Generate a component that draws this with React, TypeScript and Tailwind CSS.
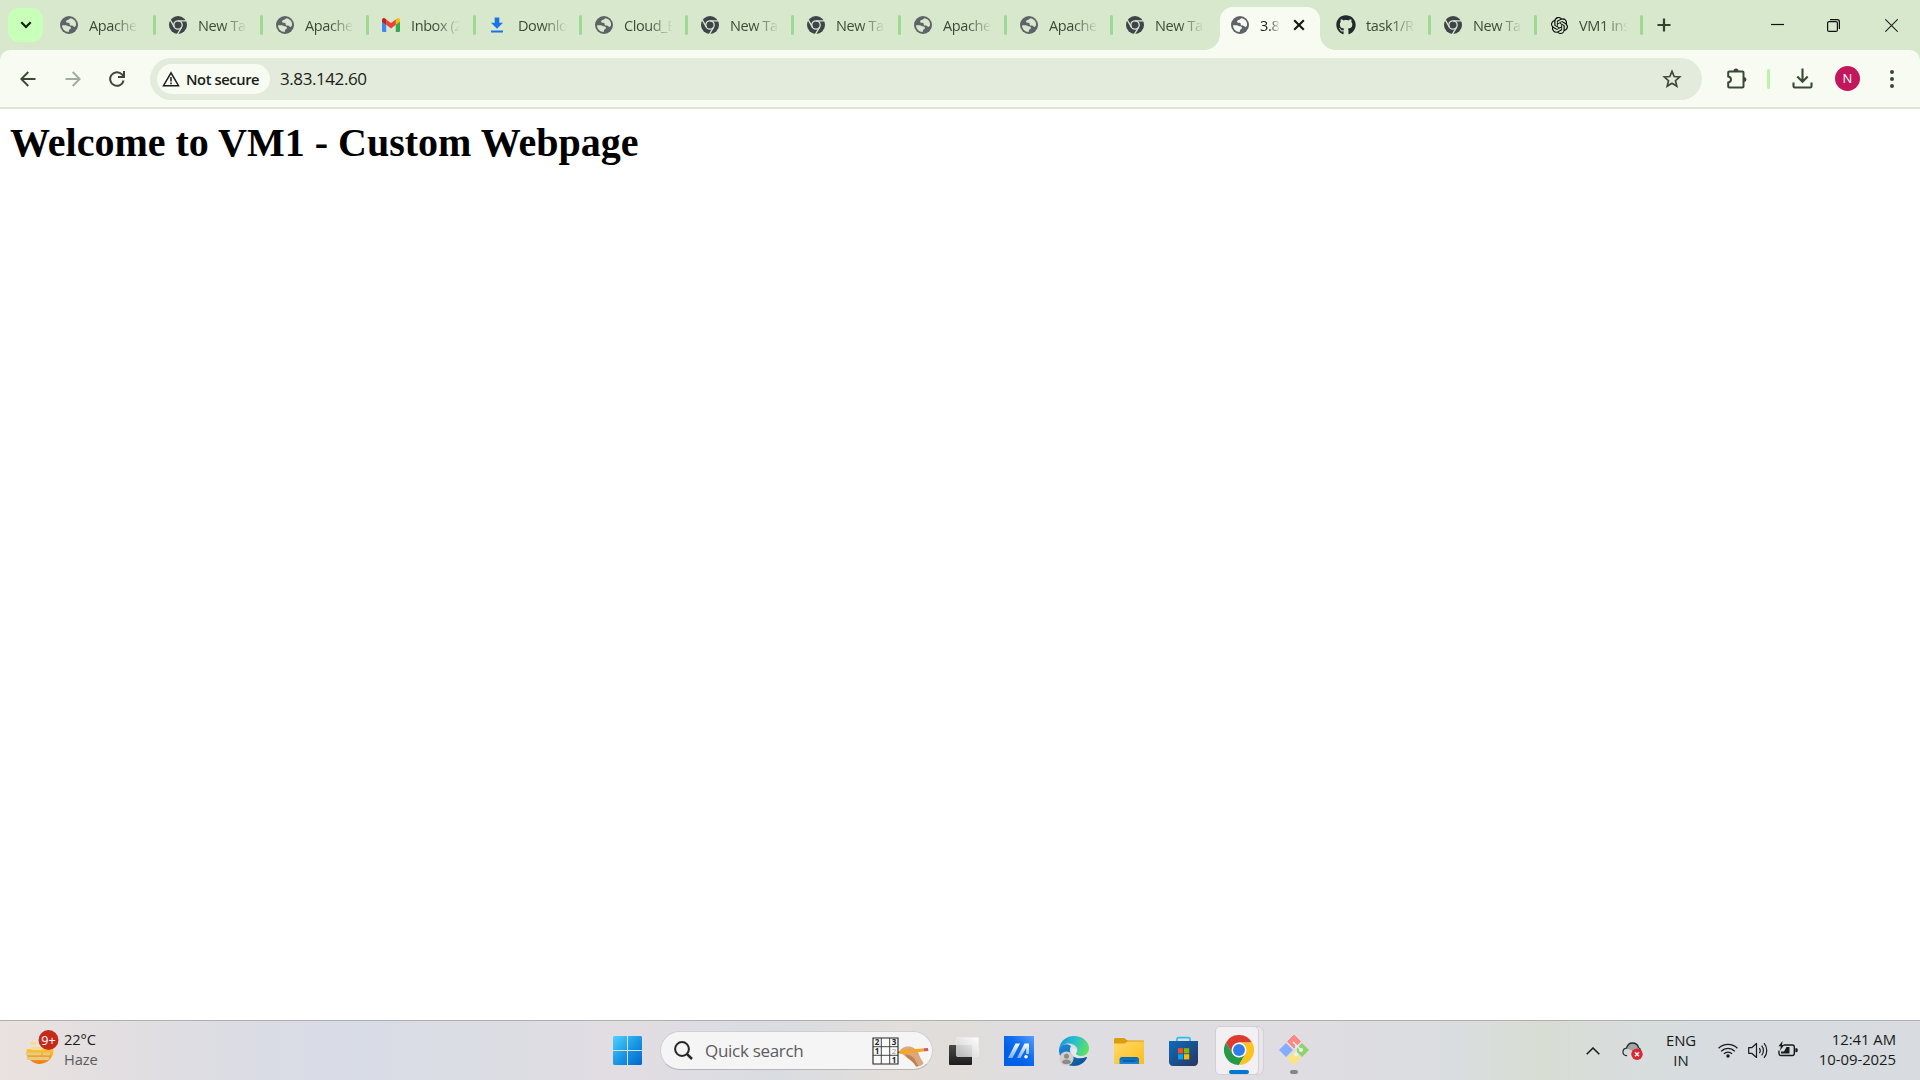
import React from "react";
import { FaGithub } from "react-icons/fa";
import { SiOpenai } from "react-icons/si";

type Kind = "globe" | "chrome" | "gmail" | "download" | "github" | "openai";

const Globe = ({ land = "#d7e8cd" }: { land?: string }) => (
  <svg viewBox="0 0 18 18" className="size-[18px]" fill={land}>
    <circle cx="9" cy="9" r="9" fill="#5f6368" />
    <path d="M10.800 2.200c-1.300.2-1.500 1.300-2.600 1.500-1.300.3-2.200 1-2.100 2.100.1 1 1.200 1.100 2.300 1 1.100 0 1.300.9 1.300 1.700 0 .9 1 1.100 2.200 1.100 1.200 0 1.300 1.400 2.500 1.300.8-.1 1.400-.7 1.600-1.600.5-3.500-1.600-6.300-5.200-7.100z" />
    <path d="M2 9.200h3.600c1.500 0 2.200 1 3.300 1.100 1.300.1 2.200.8 2 2-.2 1-1.400.8-1.800 1.600-.3.700 0 1.500-.6 2.100C4.900 15.800 2.200 13 2 9.200z" />
  </svg>
);

const ChromeMono = () => (
  <svg viewBox="0 0 18 18" className="size-[18px]">
    <circle cx="9" cy="9" r="9" fill="#3f444a" />
    <g stroke="#d7e8cd" strokeWidth="1.3" fill="none">
      <circle cx="9" cy="9" r="4.200" />
      <path d="M9 4.800h8.500M5.400 11.100L1.100 3.700M12.600 11.100L8.300 18.500" />
    </g>
  </svg>
);

const Gmail = () => (
  <svg viewBox="0 0 18 14" className="h-[14px] w-[18px]">
    <path d="M0 2.500v10.200C0 13.400.6 14 1.300 14h2.900V5.800z" fill="#4285f4" />
    <path d="M18 2.500v10.200c0 .7-.6 1.300-1.300 1.300h-2.900V5.800z" fill="#34a853" />
    <path d="M13.800 1.500v5.300L18 3.700V2c0-1.800-1.900-2.600-3.200-1.500z" fill="#fbbc04" />
    <path d="M4.200 6.800V1.500L9 5.100l4.800-3.600v5.300L9 10.400z" fill="#ea4335" />
    <path d="M0 2v1.700l4.200 3.100V1.500L3.200.5C1.900-.6 0 .2 0 2z" fill="#c5221f" />
  </svg>
);

const DownloadFav = () => (
  <svg viewBox="0 0 12 16" className="mr-[2px] h-4 w-3" fill="#1a73e8">
    <path d="M3.700 0.500h4.600v5.300H12L6 11.700 0 5.800h3.700zM0 13.500h12v2H0z" />
  </svg>
);

function Favicon({ kind }: { kind: Kind }) {
  switch (kind) {
    case "globe":
      return <Globe />;
    case "chrome":
      return <ChromeMono />;
    case "gmail":
      return <Gmail />;
    case "download":
      return <DownloadFav />;
    case "github":
      return <FaGithub className="size-5 shrink-0 text-[#24292f]" />;
    case "openai":
      return <SiOpenai className="size-[17px] text-black" />;
  }
}

function Tab({ kind, title, width, inset = "ml-[12px]" }: { kind: Kind; title: string; width: string; inset?: string }) {
  return (
    <div className={`flex h-[50px] shrink-0 items-center ${width}`}>
      <div className={`flex w-[20px] shrink-0 justify-center ${inset}`}>
        <Favicon kind={kind} />
      </div>
      <div className="ml-[10px] mt-[2px] w-[49px] overflow-hidden whitespace-nowrap text-[14.5px] leading-5 tracking-[-0.4px] text-[#3c4b37] [mask-image:linear-gradient(to_right,black_50%,transparent_100%)]">
        {title}
      </div>
    </div>
  );
}

const Sep = () => <div className="h-5 w-[3px] shrink-0 rounded-full bg-[#9fd892]" />;

const leftTabs: { kind: Kind; title: string; width: string }[] = [
  { kind: "globe", title: "Apache2", width: "w-[106px]" },
  { kind: "chrome", title: "New Tab", width: "w-[104px]" },
  { kind: "globe", title: "Apache2", width: "w-[103px]" },
  { kind: "gmail", title: "Inbox (2)", width: "w-[104px]" },
  { kind: "download", title: "Downloads", width: "w-[103px]" },
  { kind: "globe", title: "Cloud_E", width: "w-[103px]" },
  { kind: "chrome", title: "New Tab", width: "w-[103px]" },
  { kind: "chrome", title: "New Tab", width: "w-[104px]" },
  { kind: "globe", title: "Apache2", width: "w-[103px]" },
  { kind: "globe", title: "Apache2", width: "w-[103px]" },
  { kind: "chrome", title: "New Tab", width: "w-[103px]" },
];

function TabStrip() {
  return (
    <header className="flex h-[50px] items-center bg-[#d7e8cd]">
      <button className="ml-2 flex h-[34px] w-[35px] shrink-0 items-center justify-center rounded-[11px] bg-[#c8ffb9]">
        <svg viewBox="0 0 12 8" className="mb-px h-[8px] w-[12px]" fill="none" stroke="#10200d" strokeWidth="2.2">
          <path d="M1.300 1.300L6 6l4.700-4.700" />
        </svg>
      </button>
      <div className="ml-1 flex items-center">
        {leftTabs.map((t, i) => (
          <React.Fragment key={i}>
            <Tab {...t} />
            {i < 10 && <Sep />}
          </React.Fragment>
        ))}
      </div>
      <div className="relative ml-[4px] mt-[7px] flex h-[43px] w-[100px] shrink-0 items-center rounded-t-[13px] bg-[#f8fbf2]">
        <div className="absolute bottom-0 -left-[15px] size-[15px] bg-[radial-gradient(circle_at_0_0,transparent_14.500px,#f8fbf2_15px)]" />
        <div className="absolute bottom-0 -right-[15px] size-[15px] bg-[radial-gradient(circle_at_100%_0,transparent_14.500px,#f8fbf2_15px)]" />
        <div className="mb-[7px] ml-[11px]">
          <Globe land="#f8fbf2" />
        </div>
        <div className="mb-[5px] ml-[11px] w-[20px] overflow-hidden whitespace-nowrap text-[14.5px] leading-5 tracking-[-0.3px] text-[#1b1c18] [mask-image:linear-gradient(to_right,black_45%,transparent_100%)]">
          3.83.142.60
        </div>
        <svg viewBox="0 0 12 12" className="mb-[7px] ml-[13px] size-[12px]" stroke="#111a0e" strokeWidth="2.100">
          <path d="M1.200 1.200l9.600 9.600M10.800 1.200L1.200 10.800" />
        </svg>
      </div>
      <div className="ml-[3px] flex items-center">
        <Tab kind="github" title="task1/README" width="w-[105px]" inset="ml-[13px]" />
        <Sep />
        <Tab kind="chrome" title="New Tab" width="w-[103px]" />
        <Sep />
        <Tab kind="openai" title="VM1 instance" width="w-[103px]" />
        <Sep />
      </div>
      <svg viewBox="0 0 14 14" className="ml-[14px] size-[14px]" stroke="#33422e" strokeWidth="2.200">
        <path d="M7 .5v13M.5 7h13" />
      </svg>
      <div className="ml-auto mr-[22px] flex items-center">
        <svg viewBox="0 0 13 13" className="mb-0.5 size-[13px]" stroke="#111" strokeWidth="1.200">
          <path d="M0 6.500h13" />
        </svg>
        <svg viewBox="0 0 13 13" className="ml-[43px] size-[13px]" fill="none" stroke="#111" strokeWidth="1.200">
          <rect x=".6" y="2.600" width="9.800" height="9.800" rx="1.500" />
          <path d="M3 .6h7.200a2.200 2.200 0 0 1 2.200 2.200V10" />
        </svg>
        <svg viewBox="0 0 13 13" className="ml-[45px] size-[13px]" stroke="#222" strokeWidth="1.100">
          <path d="M.3.300l12.400 12.400M12.700.3L.3 12.700" />
        </svg>
      </div>
    </header>
  );
}

function Toolbar() {
  return (
    <div className="bg-[#d7e8cd]">
      <div className="flex h-[59px] items-center rounded-t-[10px] border-b-2 border-[#dde5d6] bg-[#f8fbf2]">
        <svg viewBox="0 0 16 16" className="ml-5 size-4" fill="none" stroke="#3a4936" strokeWidth="1.900">
          <path d="M15.500 8H2M8.300 1L1.300 8l7 7" />
        </svg>
        <svg viewBox="0 0 16 16" className="ml-[29px] size-4" fill="none" stroke="#a3aa9e" strokeWidth="1.900">
          <path d="M.5 8H14M7.700 1l7 7-7 7" />
        </svg>
        <svg viewBox="0 0 16 16" className="ml-[28px] mr-px size-4" fill="none" stroke="#3a4936" strokeWidth="2">
          <path d="M14.600 9.500A6.800 6.800 0 1 1 13 3.400l1.500 1.700" />
          <path d="M15 0v6H9" />
        </svg>
        <div className="ml-[24px] flex h-[42px] w-[1552px] shrink-0 items-center rounded-full bg-[#e3ebdc]">
          <div className="ml-[7px] flex h-[30px] w-[113px] items-center rounded-full bg-[#f8fbf2]">
            <svg viewBox="0 0 18 16" className="ml-[5px] h-4 w-[18px]" fill="none" stroke="#1b1c18" strokeWidth="1.500">
              <path d="M9 1.800L1.500 14.700h15z" />
              <path d="M9 6v4.500M9 11.600v1.700" />
            </svg>
            <span className="ml-[6px] whitespace-nowrap text-[14.7px] font-semibold leading-5 tracking-[-0.4px] text-[#1b1c18]">Not secure</span>
          </div>
          <span className="ml-[10px] mt-px text-[17px] leading-6 tracking-[-0.42px] text-[#1b1c18]">3.83.142.60</span>
          <svg viewBox="0 0 20 19" className="ml-auto mr-[20px] h-[19px] w-5" fill="none" stroke="#3f4a3b" strokeWidth="1.700">
            <path d="M10 2.400l2.200 5.100 5.500.5-4.200 3.700 1.300 5.400L10 14.200l-4.800 2.900 1.300-5.400L2.300 8l5.500-.5z" />
          </svg>
        </div>
        <svg viewBox="0 0 21 21" className="-mt-px ml-[24px] size-[21px]" fill="none" stroke="#3a4936" strokeWidth="2">
          <path d="M3.200 3.500h13.300c.7 0 1 .4 1 1v14c0 .6-.3 1-1 1H3.200c-.7 0-1-.4-1-1v-4c1.700-.3 2.800-1.400 2.800-3s-1.100-2.700-2.800-3v-4c0-.6.300-1 1-1z" />
          <path d="M7.500 3a2.500 2.500 0 0 1 5 0zM18 9a2.500 2.500 0 0 1 0 5z" fill="#3a4936" stroke="none" />
        </svg>
        <div className="ml-[20px] h-5 w-[3px] rounded-full bg-[#b9f3a7]" />
        <svg viewBox="0 0 21 21" className="ml-[22px] size-[21px]" fill="none" stroke="#3a4936" strokeWidth="2.100">
          <path d="M10.500.5v13M5.300 8.600l5.200 5.200 5.200-5.200M1.500 14.500v3.700c0 .8.500 1.300 1.300 1.300h15.400c.8 0 1.300-.5 1.300-1.300v-3.700" />
        </svg>
        <div className="ml-[22px] flex size-[25px] items-center justify-center rounded-full bg-[#c2185b] text-[13px] text-white">N</div>
        <svg viewBox="0 0 4 18" className="ml-[30px] h-[18px] w-1" fill="#3a4936">
          <circle cx="2" cy="2" r="2" />
          <circle cx="2" cy="9" r="2" />
          <circle cx="2" cy="16" r="2" />
        </svg>
      </div>
    </div>
  );
}

const Weather = () => (
  <svg viewBox="0 0 36 38" className="-mt-[5px] h-[38px] w-9">
    <defs>
      <linearGradient id="sun" x1="0" y1="0" x2="0" y2="1">
        <stop offset="0" stopColor="#fcc934" />
        <stop offset="1" stopColor="#f07a13" />
      </linearGradient>
    </defs>
    <path d="M2.500 20h27a14 14 0 0 1-27 6z" fill="url(#sun)" />
    <g stroke="#e3cc8b" strokeWidth="2.800" strokeLinecap="round">
      <path d="M8 14.500h3" stroke="#fbdc77" />
      <path d="M8 19.500h9" stroke="#f6dc93" />
      <path d="M3 24.800h13M20 24.800h5" />
      <path d="M4 29.500h20" />
    </g>
    <circle cx="24.500" cy="11" r="10" fill="#c42b1c" />
    <text x="24.500" y="15.500" textAnchor="middle" fontSize="12.500" fill="#fff" fontFamily="Open Sans, sans-serif">9+</text>
  </svg>
);

const Windows = () => (
  <svg viewBox="0 0 29 29" className="size-[29px]" fill="url(#win)">
    <defs>
      <linearGradient id="win" gradientUnits="userSpaceOnUse" x1="0" y1="0" x2="29" y2="29">
        <stop offset="0" stopColor="#4fd2ff" />
        <stop offset=".55" stopColor="#1793e2" />
        <stop offset="1" stopColor="#0069cf" />
      </linearGradient>
    </defs>
    <path d="M1 0h13v14H0V1zM15 0h13l1 1v13H15zM0 15h14v14H1l-1-1zM15 15h14v13l-1 1H15z" />
  </svg>
);

const SudokuArt = () => (
  <svg viewBox="0 0 58 32" className="h-8 w-[58px]">
    <path d="M1 3h25v26H1z" fill="#fafafa" stroke="#222" strokeWidth="1.100" />
    <path d="M9.300 3v26M17.700 3v26M1 11.700h25M1 20.300h25" stroke="#333" strokeWidth=".9" />
    <g fontSize="8" fontWeight="700" fill="#222" textAnchor="middle" fontFamily="Open Sans, sans-serif">
      <text x="5" y="10.300">2</text>
      <text x="22" y="10.300">3</text>
      <text x="5" y="19">1</text>
      <text x="22" y="27.500">1</text>
      <text x="22" y="19" fill="#999" fontWeight="400">2</text>
    </g>
    <path d="M28 16c.5-2 3.500-4.500 8-4.500 4 0 8 2 10 5.500 1.500 4 3 7.500 5.500 11-1 2.500-4 3.500-7.500 3.500-2-4-5-6-8.500-8.500C33 21 30 19.500 28 16z" fill="#dca77e" />
    <path d="M33 19.500c3.500-.5 7 1 9.500 4.500l4 7.300-2.500.2c-2-4-5-6-8.500-8.500z" fill="#bf8053" />
    <path d="M25 17.500l4-2.300 24-2 .3 3L29 19z" fill="#f5a623" />
    <path d="M25 17.500l2-1.200.4 1.700z" fill="#333" />
    <path d="M52 13.300l4-.3.300 2.900-4 .4z" fill="#c9567a" />
  </svg>
);

const TaskView = () => (
  <svg viewBox="0 0 30 28" className="h-7 w-[30px]">
    <defs>
      <linearGradient id="tvb" x1="0" y1="0" x2="0" y2="1">
        <stop offset="0" stopColor="#4a4a4a" />
        <stop offset="1" stopColor="#1c1c1c" />
      </linearGradient>
      <linearGradient id="tvf" x1="1" y1="0" x2="0" y2="1">
        <stop offset="0" stopColor="#fff" stopOpacity=".95" />
        <stop offset="1" stopColor="#cfcfcf" stopOpacity=".85" />
      </linearGradient>
    </defs>
    <rect x="0" y="8" width="23" height="20" rx="1" fill="url(#tvb)" />
    <rect x="7.500" y=".5" width="22" height="19" rx="1" fill="url(#tvf)" stroke="#eee" strokeWidth=".6" />
  </svg>
);

const MyAsus = () => (
  <svg viewBox="0 0 30 30" className="size-[30px]">
    <defs>
      <linearGradient id="asus" x1="1" y1="0" x2=".3" y2=".7">
        <stop offset="0" stopColor="#5b9dff" />
        <stop offset=".6" stopColor="#0f6cec" />
        <stop offset="1" stopColor="#0060e6" />
      </linearGradient>
      <linearGradient id="asusl" x1="0" y1="1" x2="0" y2="0">
        <stop offset="0" stopColor="#cfe3ff" stopOpacity=".6" />
        <stop offset="1" stopColor="#fff" />
      </linearGradient>
    </defs>
    <path d="M0 0h30v30H0z" fill="url(#asus)" />
    <path d="M4 22L11.500 7.500H16L8.500 22zM13 22l7.500-14.500H25v10.500h-2.800v-6.300L16.500 22z" fill="url(#asusl)" />
    <circle cx="22" cy="20.700" r="1.800" fill="#fff" />
  </svg>
);

const Edge = () => (
  <svg viewBox="0 0 30 30" className="size-[30px]">
    <defs>
      <linearGradient id="edg" x1="0" y1=".3" x2="1" y2=".6">
        <stop offset="0" stopColor="#1b93d6" />
        <stop offset=".45" stopColor="#27bfd0" />
        <stop offset="1" stopColor="#5fe35a" />
      </linearGradient>
      <linearGradient id="edb" x1="0" y1="0" x2="1" y2="1">
        <stop offset="0" stopColor="#1a8ede" />
        <stop offset="1" stopColor="#0b4a8f" />
      </linearGradient>
    </defs>
    <path d="M0 13c2-5 8-6 12-3-2 3-1.500 8 2 10.500 4 2.500 9 2 13.500.5.500 0 .7.400.500.800C25.500 27 20.500 30 15 30 6.500 30-.5 22.500 0 13z" fill="url(#edb)" />
    <path d="M0 14C.7 5.500 7 0 15 0c8.500 0 15 5.500 15 12.500 0 4.500-3.500 7.500-7.500 7.500-3.500 0-5.500-1.200-5.500-2.300 0-.9 1.400-1.500 1.400-3.700 0-3.500-4-6.500-8.900-6.500C5 7.500 1 10 0 14z" fill="url(#edg)" />
    <path d="M12.500 14c.5-1.500 2-2 3.200-1.600 1.300.3 2 1.300 1.900 2.600 0 1-.8 1.800-.8 2.700 0 1.700 3 2.800 6 2.500-5 2-11.500-.500-10.300-6.200z" fill="#e3e8ee" />
    <circle cx="7.500" cy="22.500" r="7" fill="#d2cfcb" />
    <circle cx="7.500" cy="20.200" r="2.500" fill="#8d8a87" />
    <path d="M3 26.500c0-4 9-4 9 0-2 2.300-7 2.300-9 0z" fill="#8d8a87" />
  </svg>
);

const Explorer = () => (
  <svg viewBox="0 0 30 28" className="h-7 w-[30px]">
    <defs>
      <linearGradient id="fold" x1="0" y1="0" x2="1" y2="1">
        <stop offset="0" stopColor="#ffdb6b" />
        <stop offset="1" stopColor="#fcbc19" />
      </linearGradient>
      <linearGradient id="foldb" x1="0" y1="0" x2="0" y2="1">
        <stop offset="0" stopColor="#0f68b0" />
        <stop offset="1" stopColor="#1787dc" />
      </linearGradient>
    </defs>
    <path d="M0 2.500C0 1.500.7 1 1.500 1H10c1.500 0 2 2.500 4 2.500h15c.6 0 1 .5 1 1V10H0z" fill="#dd9c0b" />
    <path d="M0 6.500h10c2 0 2.500-2 4.500-2H30V27H0z" fill="url(#fold)" />
    <path d="M5.500 27v-4.500c0-1.400 1-2.500 2.500-2.500h14.500c1.500 0 2.500 1.100 2.500 2.500V27z" fill="url(#foldb)" />
    <path d="M9 24h12.500" stroke="#0a4f8d" strokeWidth="1.200" />
  </svg>
);

const Store = () => (
  <svg viewBox="0 0 29 30" className="h-[30px] w-[29px]">
    <defs>
      <linearGradient id="sto" x1="0" y1="0" x2="1" y2="1">
        <stop offset="0" stopColor="#0d6cbd" />
        <stop offset="1" stopColor="#2a3460" />
      </linearGradient>
    </defs>
    <path d="M8 6V3c0-.8.500-1.300 1.300-1.300h10.400c.8 0 1.300.5 1.300 1.300v3" fill="none" stroke="#2bc0f0" strokeWidth="1.700" />
    <path d="M0 5h29v21c0 2.300-1.500 4-4 4H4c-2.500 0-4-1.700-4-4z" fill="url(#sto)" />
    <path d="M9 12.200h5.200v5.200H9z" fill="#f25022" />
    <path d="M15 12.200h5.200v5.200H15z" fill="#7fba00" />
    <path d="M9 18.200h5.200v5.200H9z" fill="#00a4ef" />
    <path d="M15 18.200h5.200v5.200H15z" fill="#ffb900" />
  </svg>
);

const ChromeColor = () => (
  <svg viewBox="0 0 48 48" className="size-[30px]">
    <path d="M24 12h20.800A24 24 0 0 0 3.200 12l10.400 18z" fill="#df3a2e" />
    <path d="M13.600 30L3.200 12A24 24 0 0 0 24 48l10.400-18z" fill="#25984a" />
    <path d="M34.400 30L24 48a24 24 0 0 0 20.800-36H24z" fill="#fcc31e" />
    <circle cx="24" cy="24" r="12" fill="#fff" />
    <circle cx="24" cy="24" r="9.500" fill="#2f7de9" />
  </svg>
);

const GitIcon = () => (
  <svg viewBox="0 0 30 30" className="size-[30px]">
    <path d="M15 0l6.500 6.500L15 13 8.500 6.500z" fill="#fb8a86" stroke="#fb8a86" strokeLinejoin="round" />
    <path d="M7 8l7 7-7 7-7-7z" fill="#84aefb" />
    <path d="M23 8l7 7-7 7-7-7z" fill="#8fd36a" />
    <path d="M15 16.500l7 7-7 6.500-7-6.500z" fill="#fbe384" />
    <path d="M14 7l8 8M17 10v9" stroke="#e8ebe6" strokeWidth="1.600" />
    <circle cx="17" cy="19.500" r="2" fill="#eef0ec" />
    <circle cx="22" cy="15" r="2" fill="#eef0ec" />
  </svg>
);

const CloudError = () => (
  <svg viewBox="0 0 21 18" className="h-[18px] w-[21px]">
    <path d="M5 13.500C2.300 13.500 1 12 1 10s1.500-3.600 3.500-3.800C5.300 3 7.700 1 10.500 1c3 0 5.300 2 6 4.500 1.300.5 2 2 2 3.500" fill="#a3a6a8" stroke="#2b2b2b" strokeWidth="1.300" />
    <path d="M5 13c-2.200 0-3.300-1.300-3.300-3S3 7 5 7c2.500 0 4 1 6 2.500L9 13z" fill="#d6d8da" />
    <circle cx="15" cy="12.200" r="5.700" fill="#dc2631" />
    <path d="M13 10.200l4 4m0-4l-4 4" stroke="#fff" strokeWidth="1.400" />
  </svg>
);

const Wifi = () => (
  <svg viewBox="0 0 20 15" className="h-[15px] w-5" fill="none" stroke="#1a1a1a" strokeWidth="1.300">
    <path d="M.6 5.300a13.300 13.300 0 0 1 18.800 0M3.200 8.200a9.600 9.600 0 0 1 13.600 0M5.900 10.900a5.800 5.800 0 0 1 8.200 0" />
    <circle cx="10" cy="13" r="1.700" fill="#1a1a1a" stroke="none" />
  </svg>
);

const Speaker = () => (
  <svg viewBox="0 0 20 17" className="h-[17px] w-5" fill="none" stroke="#1a1a1a" strokeWidth="1.200" strokeLinejoin="round">
    <path d="M.7 5.700h3L8.500 1.500v14L3.700 11.300h-3z" />
    <path d="M11.300 6a4 4 0 0 1 0 5M13.600 3.700a7.200 7.200 0 0 1 0 9.600M16 1.200a11 11 0 0 1 0 14.600" />
  </svg>
);

const Battery = () => (
  <svg viewBox="0 0 20 16" className="h-4 w-5">
    <path d="M5.500 4h8.800c1.200 0 2 .8 2 2v6.500c0 1.200-.8 2-2 2H3c-1.200 0-2-.8-2-2V9.500" fill="none" stroke="#1a1a1a" strokeWidth="1.400" />
    <path d="M17.300 7.200h1c.8 0 1.400.6 1.400 1.200v1.700c0 .7-.6 1.200-1.400 1.200h-1z" fill="#1a1a1a" />
    <path d="M3 12.600V10.500h3L8.500 6h3v6.600z" fill="#1a1a1a" />
    <path d="M4.500 0L.5 5.300h2.300L2 9.500 6.300 4H4z" fill="#1a1a1a" />
  </svg>
);

function Taskbar() {
  return (
    <footer className="flex h-[60px] items-center border-t border-[#aeb0b2] bg-[linear-gradient(90deg,#e9e2df_0px,#e4dfe0_90px,#dadce5_260px,#d8dce6_360px,#dcdde3_520px,#e2dde3_620px,#d9dce1_780px,#e3deda_900px,#e0ddda_950px,#dedde2_1080px,#dfdde2_1300px,#dadde0_1450px,#d7ddd3_1545px,#d8dddb_1600px,#d7dce0_1700px,#d8dce0_1920px)]">
      <div className="ml-[24px] flex w-[586px] shrink-0 items-center">
        <Weather />
        <div className="-mt-[3px] ml-[4px] text-[14.700px] leading-5 tracking-[-0.1px]">
          <div className="text-[#1a1a1a]">22°C</div>
          <div className="text-[#5b5b5e]">Haze</div>
        </div>
      </div>
      <div className="ml-[3px] shrink-0">
        <Windows />
      </div>
      <div className="ml-[18px] flex h-[39px] w-[273px] shrink-0 items-center rounded-full border border-[#cfcfd2] border-b-[#b5b5b8] bg-[#f5f5f6]">
        <svg viewBox="0 0 19 19" className="ml-[13px] size-[19px]" fill="none" stroke="#262626" strokeWidth="2">
          <circle cx="8" cy="8" r="6.900" />
          <path d="M12.800 12.800l5.200 5.200" strokeWidth="2.500" />
        </svg>
        <span className="ml-[12px] text-[17px] leading-6 tracking-[-0.3px] text-[#5c5c5e]">Quick search</span>
        <div className="ml-auto mr-[2px]">
          <SudokuArt />
        </div>
      </div>
      <div className="ml-[16px] flex shrink-0 items-center">
        <TaskView />
        <div className="ml-[25px]">
          <MyAsus />
        </div>
        <div className="ml-[25px]">
          <Edge />
        </div>
        <div className="ml-[25px]">
          <Explorer />
        </div>
        <div className="ml-[25px]">
          <Store />
        </div>
      </div>
      <div className="ml-[17px] flex h-[49px] w-[49px] shrink-0 rounded-[6px] border border-[#d3d0d5] bg-[#e8e6ea]">
        <div className="-ml-px -mt-px flex h-[49px] w-[44px] flex-col items-center rounded-[5px] border border-[#d3d0d5] bg-[#f2f0f3] pt-[8px]">
          <div className="ml-[3px]">
            <ChromeColor />
          </div>
          <div className="ml-[4px] mt-[5px] h-1 w-5 shrink-0 rounded-full bg-[#0078d4]" />
        </div>
      </div>
      <div className="ml-[15px] flex h-[49px] shrink-0 flex-col items-center pt-[9px]">
        <GitIcon />
        <div className="mt-[5px] h-1 w-2 shrink-0 rounded-full bg-[#858588]" />
      </div>
      <div className="ml-auto mr-[24px] flex shrink-0 items-center text-[14.900px] leading-5 tracking-[-0.05px] text-[#1a1a1a]">
        <svg viewBox="0 0 14 8" className="h-2 w-[14px]" fill="none" stroke="#1a1a1a" strokeWidth="1.500">
          <path d="M.7 7.300L7 1l6.300 6.300" />
        </svg>
        <div className="ml-[22px]">
          <CloudError />
        </div>
        <div className="-mt-[2px] ml-[22px] w-[32px] text-center">
          <div>ENG</div>
          <div>IN</div>
        </div>
        <div className="-mt-px ml-[21px]">
          <Wifi />
        </div>
        <div className="ml-[10px]">
          <Speaker />
        </div>
        <div className="-mt-1 ml-[10px]">
          <Battery />
        </div>
        <div className="-mt-[3px] w-[98px] text-right">
          <div>12:41 AM</div>
          <div>10-09-2025</div>
        </div>
      </div>
    </footer>
  );
}

export default function App() {
  return (
    <div className="flex h-[1080px] w-[1920px] flex-col overflow-hidden bg-white font-['Open_Sans','Noto_Sans',sans-serif]">
      <TabStrip />
      <Toolbar />
      <main className="flex-1 bg-white px-[10px] pt-[11px]">
        <h1 className="font-['Liberation_Serif','Times_New_Roman',serif] text-[40px] font-bold leading-[46px] text-black">
          Welcome to VM1 - Custom Webpage
        </h1>
      </main>
      <Taskbar />
    </div>
  );
}
